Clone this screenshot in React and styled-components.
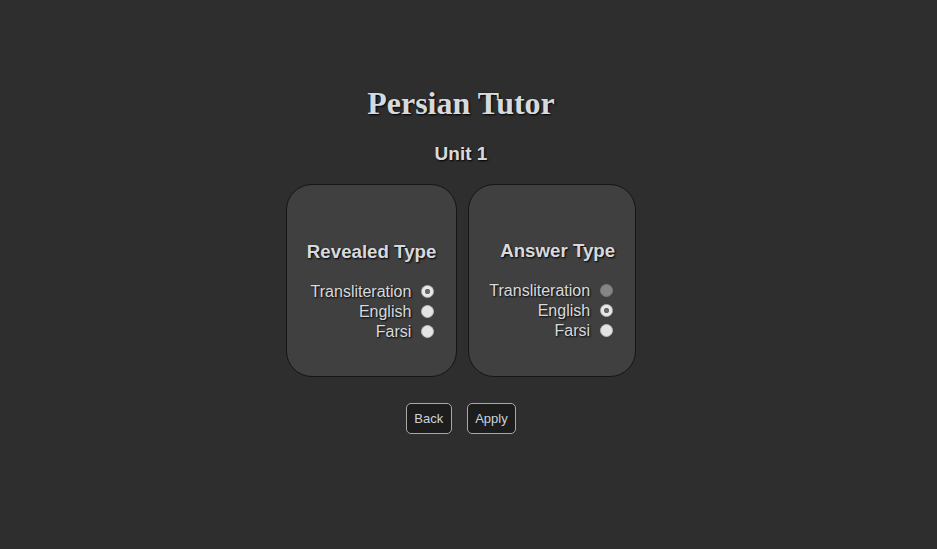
import React, { useState } from "react";
import styled, { createGlobalStyle } from "styled-components";

const GlobalStyle = createGlobalStyle`
  html, body {
    margin: 0;
    background: #2e2e2e;
  }
  body {
    font-family: "Liberation Sans", Arial, sans-serif;
  }
`;

const Page = styled.div`
  min-height: 549px;
  display: flex;
  flex-direction: column;
  align-items: center;
  padding-top: 84px;
  margin-right: 15px;
  box-sizing: border-box;
  color: #d6dadf;
  text-shadow: 1px 1px 2px #000;
`;

const Title = styled.h1`
  margin: 0;
  font-family: "Liberation Serif", "Times New Roman", serif;
  font-size: 32px;
  line-height: 38px;
  font-weight: bold;
`;

const Unit = styled.h3`
  margin: 20px 0 0;
  font-size: 19px;
  line-height: 24px;
  font-weight: bold;
`;

const Cards = styled.div`
  display: flex;
  gap: 11px;
  margin-top: 18px;
`;

const Card = styled.div`
  background: #404040;
  border: 1px solid #151515;
  border-radius: 26px;
  padding: ${(p) => (p.$shift ? "55px 20px 35px" : "56px 20px 34px")};
  text-align: right;
  display: flex;
  flex-direction: column;
  align-items: flex-end;
`;

const CardTitle = styled.h4`
  margin: 0 0 19px;
  font-size: 18.7px;
  line-height: 22px;
  font-weight: bold;
`;

const Row = styled.label`
  display: flex;
  align-items: center;
  gap: 10px;
  font-size: 16px;
  line-height: 20px;
`;

const Radio = styled.input.attrs({ type: "radio" })`
  appearance: none;
  margin: 0 2px 2px 0;
  width: 13px;
  height: 13px;
  border-radius: 50%;
  background: #e4e4e4;
  border: 1px solid #b8b8b8;
  box-sizing: border-box;

  &:checked {
    background: radial-gradient(circle, #6a6a6a 0 2.4px, #e8e8e8 3px);
  }

  &:disabled {
    background: #858585;
    border-color: #7a7a7a;
  }
`;

const Buttons = styled.div`
  display: flex;
  gap: 15px;
  margin-top: 26px;
`;

const Button = styled.button`
  height: 31px;
  padding: 0 7.5px;
  background: #1d1d1d;
  color: #c9d3de;
  border: 1px solid #a8a8a8;
  border-radius: 5px;
  font-family: "Liberation Sans", Arial, sans-serif;
  font-size: 13px;
  cursor: pointer;
`;

const options = ["Transliteration", "English", "Farsi"];

function TypeCard({ title, name, value, onChange, disabled, shift }) {
  return (
    <Card $shift={shift}>
      <CardTitle>{title}</CardTitle>
      {options.map((o) => (
        <Row key={o}>
          {o}
          <Radio
            name={name}
            checked={value === o}
            disabled={disabled === o}
            onChange={() => onChange(o)}
          />
        </Row>
      ))}
    </Card>
  );
}

export default function App() {
  const [revealed, setRevealed] = useState("Transliteration");
  const [answer, setAnswer] = useState("English");

  return (
    <>
      <GlobalStyle />
      <Page>
        <Title>Persian Tutor</Title>
        <Unit>Unit 1</Unit>
        <Cards>
          <TypeCard
            title="Revealed Type"
            name="revealed"
            value={revealed}
            onChange={setRevealed}
          />
          <TypeCard
            title="Answer Type"
            name="answer"
            value={answer}
            onChange={setAnswer}
            disabled={revealed}
            shift
          />
        </Cards>
        <Buttons>
          <Button>Back</Button>
          <Button>Apply</Button>
        </Buttons>
      </Page>
    </>
  );
}
